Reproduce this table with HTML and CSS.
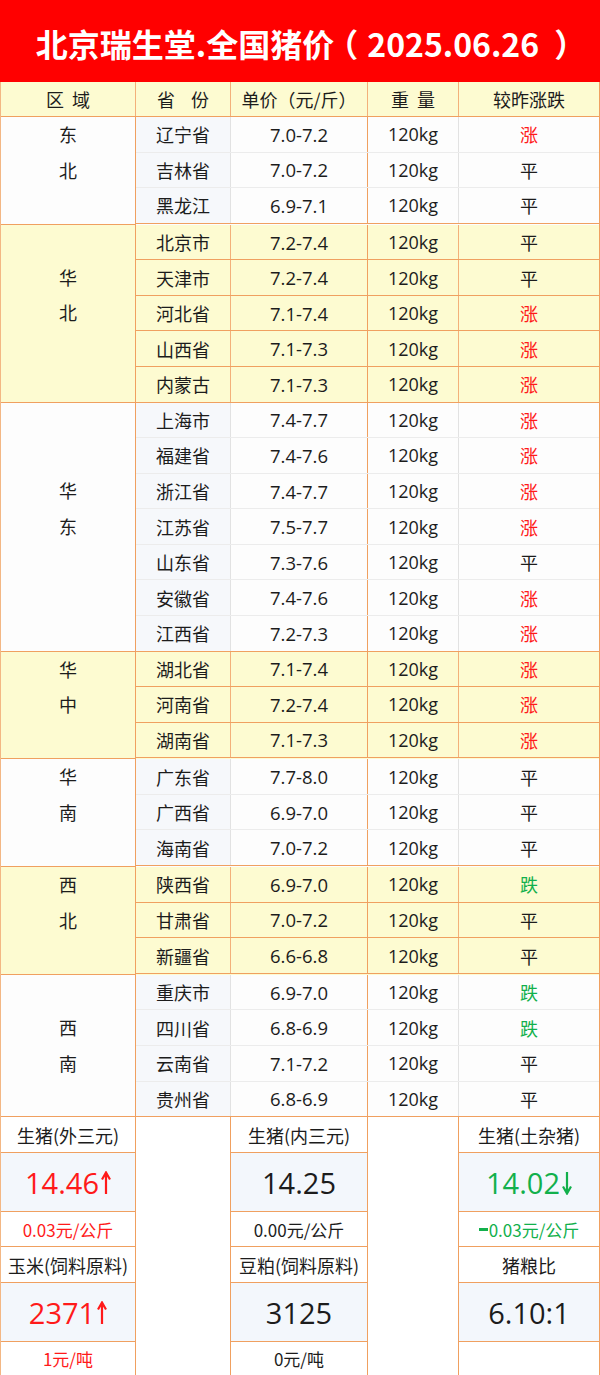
FILE: index.html
```html
<!DOCTYPE html>
<html lang="zh-CN">
<head>
<meta charset="utf-8">
<title>北京瑞生堂.全国猪价</title>
<link rel="stylesheet" href="styles.css">
</head>
<body>
<div class="sheet">
  <div class="title">北京瑞生堂.全国猪价<span class="pl">（</span>2025.06.26<span class="pr">）</span></div>
  <div class="table">
    <div class="row head">
      <div class="c c1">区&nbsp;&nbsp;域</div>
      <div class="c c2">省&nbsp;&nbsp;&nbsp;&nbsp;份</div>
      <div class="c c3">单价（元/斤）</div>
      <div class="c c4">重&nbsp;&nbsp;量</div>
      <div class="c c5">较昨涨跌</div>
    </div>

    <div class="group white">
      <div class="region shift"><span>东</span><span>北</span></div>
      <div class="rows">
        <div class="row"><div class="c c2">辽宁省</div><div class="c c3">7.0-7.2</div><div class="c c4">120kg</div><div class="c c5 up">涨</div></div>
        <div class="row"><div class="c c2">吉林省</div><div class="c c3">7.0-7.2</div><div class="c c4">120kg</div><div class="c c5">平</div></div>
        <div class="row"><div class="c c2">黑龙江</div><div class="c c3">6.9-7.1</div><div class="c c4">120kg</div><div class="c c5">平</div></div>
      </div>
    </div>

    <div class="group yellow">
      <div class="region shift"><span>华</span><span>北</span></div>
      <div class="rows">
        <div class="row"><div class="c c2">北京市</div><div class="c c3">7.2-7.4</div><div class="c c4">120kg</div><div class="c c5">平</div></div>
        <div class="row"><div class="c c2">天津市</div><div class="c c3">7.2-7.4</div><div class="c c4">120kg</div><div class="c c5">平</div></div>
        <div class="row"><div class="c c2">河北省</div><div class="c c3">7.1-7.4</div><div class="c c4">120kg</div><div class="c c5 up">涨</div></div>
        <div class="row"><div class="c c2">山西省</div><div class="c c3">7.1-7.3</div><div class="c c4">120kg</div><div class="c c5 up">涨</div></div>
        <div class="row"><div class="c c2">内蒙古</div><div class="c c3">7.1-7.3</div><div class="c c4">120kg</div><div class="c c5 up">涨</div></div>
      </div>
    </div>

    <div class="group white">
      <div class="region shift"><span>华</span><span>东</span></div>
      <div class="rows">
        <div class="row"><div class="c c2">上海市</div><div class="c c3">7.4-7.7</div><div class="c c4">120kg</div><div class="c c5 up">涨</div></div>
        <div class="row"><div class="c c2">福建省</div><div class="c c3">7.4-7.6</div><div class="c c4">120kg</div><div class="c c5 up">涨</div></div>
        <div class="row"><div class="c c2">浙江省</div><div class="c c3">7.4-7.7</div><div class="c c4">120kg</div><div class="c c5 up">涨</div></div>
        <div class="row"><div class="c c2">江苏省</div><div class="c c3">7.5-7.7</div><div class="c c4">120kg</div><div class="c c5 up">涨</div></div>
        <div class="row"><div class="c c2">山东省</div><div class="c c3">7.3-7.6</div><div class="c c4">120kg</div><div class="c c5">平</div></div>
        <div class="row"><div class="c c2">安徽省</div><div class="c c3">7.4-7.6</div><div class="c c4">120kg</div><div class="c c5 up">涨</div></div>
        <div class="row"><div class="c c2">江西省</div><div class="c c3">7.2-7.3</div><div class="c c4">120kg</div><div class="c c5 up">涨</div></div>
      </div>
    </div>

    <div class="group yellow">
      <div class="region shift"><span>华</span><span>中</span></div>
      <div class="rows">
        <div class="row"><div class="c c2">湖北省</div><div class="c c3">7.1-7.4</div><div class="c c4">120kg</div><div class="c c5 up">涨</div></div>
        <div class="row"><div class="c c2">河南省</div><div class="c c3">7.2-7.4</div><div class="c c4">120kg</div><div class="c c5 up">涨</div></div>
        <div class="row"><div class="c c2">湖南省</div><div class="c c3">7.1-7.3</div><div class="c c4">120kg</div><div class="c c5 up">涨</div></div>
      </div>
    </div>

    <div class="group white">
      <div class="region shift"><span>华</span><span>南</span></div>
      <div class="rows">
        <div class="row"><div class="c c2">广东省</div><div class="c c3">7.7-8.0</div><div class="c c4">120kg</div><div class="c c5">平</div></div>
        <div class="row"><div class="c c2">广西省</div><div class="c c3">6.9-7.0</div><div class="c c4">120kg</div><div class="c c5">平</div></div>
        <div class="row"><div class="c c2">海南省</div><div class="c c3">7.0-7.2</div><div class="c c4">120kg</div><div class="c c5">平</div></div>
      </div>
    </div>

    <div class="group yellow">
      <div class="region shift"><span>西</span><span>北</span></div>
      <div class="rows">
        <div class="row"><div class="c c2">陕西省</div><div class="c c3">6.9-7.0</div><div class="c c4">120kg</div><div class="c c5 down">跌</div></div>
        <div class="row"><div class="c c2">甘肃省</div><div class="c c3">7.0-7.2</div><div class="c c4">120kg</div><div class="c c5">平</div></div>
        <div class="row"><div class="c c2">新疆省</div><div class="c c3">6.6-6.8</div><div class="c c4">120kg</div><div class="c c5">平</div></div>
      </div>
    </div>

    <div class="group white">
      <div class="region"><span>西</span><span>南</span></div>
      <div class="rows">
        <div class="row"><div class="c c2">重庆市</div><div class="c c3">6.9-7.0</div><div class="c c4">120kg</div><div class="c c5 down">跌</div></div>
        <div class="row"><div class="c c2">四川省</div><div class="c c3">6.8-6.9</div><div class="c c4">120kg</div><div class="c c5 down">跌</div></div>
        <div class="row"><div class="c c2">云南省</div><div class="c c3">7.1-7.2</div><div class="c c4">120kg</div><div class="c c5">平</div></div>
        <div class="row"><div class="c c2">贵州省</div><div class="c c3">6.8-6.9</div><div class="c c4">120kg</div><div class="c c5">平</div></div>
      </div>
    </div>

    <div class="summary">
      <div class="col k1">
        <div class="s label">生猪(外三元)</div>
        <div class="s value up">14.46<svg class="arrow" viewBox="0 0 10 24" width="10" height="24"><path d="M5 23V2M1 8.5L5 1.5L9 8.5" fill="none" stroke="currentColor" stroke-width="2.2" stroke-linejoin="miter"/></svg></div>
        <div class="s sub up">0.03元/公斤</div>
        <div class="s label">玉米(饲料原料)</div>
        <div class="s value up">2371<svg class="arrow" viewBox="0 0 10 24" width="10" height="24"><path d="M5 23V2M1 8.5L5 1.5L9 8.5" fill="none" stroke="currentColor" stroke-width="2.2" stroke-linejoin="miter"/></svg></div>
        <div class="s sub up">1元/吨</div>
      </div>
      <div class="col k2 blank"></div>
      <div class="col k3">
        <div class="s label">生猪(内三元)</div>
        <div class="s value">14.25</div>
        <div class="s sub">0.00元/公斤</div>
        <div class="s label">豆粕(饲料原料)</div>
        <div class="s value">3125</div>
        <div class="s sub">0元/吨</div>
      </div>
      <div class="col k4 blank"></div>
      <div class="col k5">
        <div class="s label">生猪(土杂猪)</div>
        <div class="s value down">14.02<svg class="arrow" viewBox="0 0 10 24" width="10" height="24"><path d="M5 1V22M1 15.5L5 22.5L9 15.5" fill="none" stroke="currentColor" stroke-width="2.2" stroke-linejoin="miter"/></svg></div>
        <div class="s sub down"><span class="dash"></span>0.03元/公斤</div>
        <div class="s label">猪粮比</div>
        <div class="s value">6.10:1</div>
        <div class="s sub"></div>
      </div>
    </div>
  </div>
</div>
</body>
</html>
```

FILE: styles.css
```css
* { box-sizing: border-box; }
html, body { margin: 0; padding: 0; background: #ffffff; }
body {
  width: 600px;
  font-family: "Open Sans", "Noto Sans CJK SC", sans-serif;
  color: #1c1c1c;
}
.sheet { width: 600px; }
.title {
  height: 82px;
  background: #ff0000;
  color: #ffffff;
  font-family: "Noto Sans CJK SC", sans-serif;
  font-weight: 700;
  font-size: 32px;
  display: flex;
  align-items: center;
  justify-content: center;
  padding-top: 4px;
  padding-left: 6px;
  white-space: pre;
}
.title .pl, .title .pr { font-feature-settings: "halt" 1; }
.title .pl { margin-left: 8px; margin-right: 9px; }
.title .pr { margin-left: 15px; }
.table {
  border-left: 1px solid #f3b784;
  border-right: 1px solid #f0a060;
}
.row { display: flex; height: 35.57px; }
.row.head {
  height: 35px;
  background: #fdfbd1;
  border-bottom: 1px solid #f0a060;
}
.c {
  display: flex;
  align-items: center;
  justify-content: center;
  font-size: 18px;
  border-right: 1px solid #f3b07a;
  white-space: nowrap;
}
.c1 { width: 135px; }
.c2 { width: 95px; font-family: "Noto Sans CJK SC", sans-serif; }
.c3 { width: 137px; font-size: 18.5px; }
.c4 { width: 91px; }
.c5 { width: 140px; border-right: none; font-family: "Noto Sans CJK SC", sans-serif; }
.head .c { font-family: "Noto Sans CJK SC", sans-serif; font-size: 18px; }
.up { color: #ff1a1a; }
.down { color: #12b04c; }

.group { display: flex; }
.group.yellow { background: #fdfbd1; }
.group.white { background: #fdfdfd; }
.region {
  width: 135px;
  border-right: 1px solid #f0a060;
  border-bottom: 1px solid #f0a060;
  display: flex;
  flex-direction: column;
  align-items: center;
  justify-content: center;
  font-family: "Noto Sans CJK SC", sans-serif;
  font-size: 18px;
  line-height: 35.6px;
}
.region.shift { padding-bottom: 35.6px; }
.rows { flex: 1; display: flex; flex-direction: column; }
.rows .row { border-bottom: 1px solid #f0a060; }
.white .rows .row { border-bottom-color: #ececec; }
.white .rows .row:last-child { border-bottom-color: #f0a060; }
.white .rows .c2 { background: #f6f8fb; border-right-color: #e2e2e2; }
.white .rows .c3 { border-right-color: #f0a060; }
.white .rows .c4 { border-right-color: #e2e2e2; }
.yellow .rows .c3 { border-right-color: #f0a060; }

.summary {
  display: flex;
  height: 261px;
  border-bottom: 2px solid #e98a3a;
}
.col {
  display: grid;
  grid-template-rows: 36px 59px 35px 36px 59px 33px;
  border-right: 1px solid #f0a060;
}
.k1 { width: 135px; }
.k2 { width: 95px; background: #ffffff; }
.k3 { width: 137px; }
.k4 { width: 91px; background: #ffffff; }
.k5 { width: 140px; border-right: none; }
.s {
  display: flex;
  align-items: center;
  justify-content: center;
  border-bottom: 1px solid #f0a060;
  font-family: "Noto Sans CJK SC", sans-serif;
  white-space: nowrap;
  background: #ffffff;
}
.s:last-child { border-bottom: none; }
.label { font-size: 18px; }
.value {
  font-size: 29px;
  background: #f3f7fc;
  font-family: "Open Sans", "Noto Sans CJK SC", sans-serif;
}
.arrow { margin-left: 2px; margin-top: 1px; }
.sub { font-size: 17px; }
.dash {
  display: inline-block;
  width: 9px;
  height: 3px;
  background: currentColor;
  margin-right: 1px;
  margin-top: 1px;
}
```
